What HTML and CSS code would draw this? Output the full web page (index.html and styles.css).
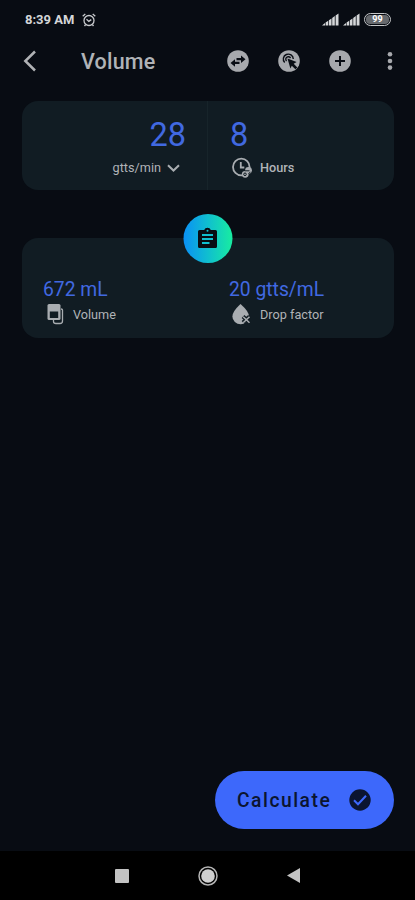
FILE: index.html
```html
<!DOCTYPE html>
<html lang="en">
<head>
    <meta charset="UTF-8">
    <meta name="viewport" content="width=device-width, initial-scale=1.0">
    <title>Volume</title>
    <link rel="stylesheet" href="styles.css">
</head>
<body>
    <!-- Status bar -->
    <div class="status-bar">
        <span class="time">8:39 AM</span>
        <svg class="alarm" width="14" height="14" viewBox="0 0 14 14" fill="none" stroke="#c9cbce" stroke-width="1.3">
            <circle cx="7" cy="7.5" r="5"/>
            <path d="M4.5 6.3 6.8 8.4 9.3 6.6M.7 3.2 3.3 1M13.3 3.2 10.7 1M3.6 11.6 2.5 13M10.4 11.6 11.5 13"/>
        </svg>
        <div class="status-right">
            <svg width="17" height="13" viewBox="0 0 17 13" fill="#d4d6d8">
                <path d="M0 12.5 3 10v2.5zM3.6 9.6 6.2 7.8v4.7H3.6zM6.9 7.3 9.5 5.5v7H6.9zM10.2 5 12.8 3.1v9.4h-2.6zM13.6 2.5 16.5.4v12.1h-2.9z"/>
            </svg>
            <svg width="17" height="13" viewBox="0 0 17 13" fill="#d4d6d8">
                <path d="M0 12.5 3 10v2.5zM3.6 9.6 6.2 7.8v4.7H3.6zM6.9 7.3 9.5 5.5v7H6.9zM10.2 5 12.8 3.1v9.4h-2.6zM13.6 2.5 16.5.4v12.1h-2.9z"/>
            </svg>
            <span class="battery"><span class="battery-level">99</span></span>
        </div>
    </div>

    <!-- Toolbar -->
    <header class="toolbar">
        <svg class="back" width="14" height="22" viewBox="0 0 14 22" fill="none" stroke="#b0b2b5" stroke-width="2.5">
            <path d="M12 1.5 2.3 11 12 20.5"/>
        </svg>
        <h1>Volume</h1>
        <div class="actions">
            <svg width="22" height="22" viewBox="0 0 22 22">
                <circle cx="11" cy="11" r="10.8" fill="#a7a9ad"/>
                <path d="M9.5 8h4.5V5.5l4.500 3.700-4.500 3.700v-2.700H9.500zM12.500 11.800H8V9.300L3.500 13 8 16.700V14h4.500z" fill="#090d14"/>
            </svg>
            <svg width="22" height="22" viewBox="0 0 22 22">
                <circle cx="11" cy="11" r="10.8" fill="#a7a9ad"/>
                <path d="M6.7 12.6A5 5 0 1 1 15.3 9M8.6 11.1a2.5 2.5 0 1 1 3.9-3" fill="none" stroke="#090d14" stroke-width="1.4"/>
                <path d="M9.5 8.5 18.6 12l-2.9 1.8 3.6 3.7-1.9 1.8-3.6-3.6-1.4 2.7z" fill="#090d14"/>
            </svg>
            <svg width="22" height="22" viewBox="0 0 22 22">
                <circle cx="11" cy="11" r="10.8" fill="#a7a9ad"/>
                <path d="M11 6v10M6 11h10" stroke="#090d14" stroke-width="2"/>
            </svg>
            <svg class="more" width="6" height="22" viewBox="0 0 6 22" fill="#a7a9ad">
                <circle cx="3" cy="4.2" r="2.3"/>
                <circle cx="3" cy="11" r="2.3"/>
                <circle cx="3" cy="17.6" r="2.3"/>
            </svg>
        </div>
    </header>

    <main class="content">
        <!-- Input values -->
        <section class="card input-card">
            <div class="field field-rate">
                <div class="value">28</div>
                <div class="label">
                    <span>gtts/min</span>
                    <svg width="13" height="8" viewBox="0 0 13 8" fill="none" stroke="#a9adb1" stroke-width="2">
                        <path d="M1 1.2 6.5 6.5 12 1.2"/>
                    </svg>
                </div>
            </div>
            <div class="field field-time">
                <div class="value">8</div>
                <div class="label">
                    <svg width="20" height="21" viewBox="0 0 20 21" fill="none" stroke="#a9adb1" stroke-width="1.8">
                        <circle cx="9.3" cy="10" r="8.3"/>
                        <path d="M8.8 5v5.5h3.5"/>
                        <circle cx="16.5" cy="13.3" r="3.4" fill="#a9adb1" stroke="none"/>
                        <circle cx="13.2" cy="17.3" r="3.4" fill="#a9adb1" stroke="none"/>
                        <circle cx="13" cy="17.3" r="1.3" stroke="#111c23" stroke-width="1"/>
                        <path d="M13 13.8h4.5M16.5 16.8l2-2" stroke="#111c23" stroke-width="1"/>
                    </svg>
                    <span class="strong">Hours</span>
                </div>
            </div>
        </section>

        <!-- Results -->
        <section class="card result-card">
            <div class="badge">
                <svg width="20" height="23" viewBox="0 0 20 23">
                    <path d="M2 3h4.7a3.5 3.5 0 0 1 6.6 0H18q1.5 0 1.5 1.5v15Q19.5 21 18 21H2Q.5 21 .5 19.5v-15Q.5 3 2 3z" fill="#080d13"/>
                    <circle cx="10" cy="3.7" r="1" fill="#10bfcf"/>
                    <path d="M4.5 8h11M4.5 12h11M4.5 16h7.5" stroke="#10bfcf" stroke-width="2"/>
                </svg>
            </div>
            <div class="field result">
                <div class="value">672 mL</div>
                <div class="label">
                    <svg width="17" height="21" viewBox="0 0 17 21">
                        <path d="M2 0h10q1.5 0 1.5 1.5v13q0 1.5-1.5 1.5H2Q.5 16 .5 14.5v-13Q.5 0 2 0z" fill="#a9adb1"/>
                        <path d="M2.8 7.5h8.4V14H2.8z" fill="#111c23"/>
                        <path d="M6.5 16v1.5q0 2 2.5 2h4q2.5 0 2.5-2.5V6q0-1-1.5-1" fill="none" stroke="#a9adb1" stroke-width="1.3"/>
                    </svg>
                    <span>Volume</span>
                </div>
            </div>
            <div class="field result result-right">
                <div class="value">20 gtts/mL</div>
                <div class="label">
                    <svg width="20" height="21" viewBox="0 0 20 21">
                        <path d="M8.5 0Q17 7.5 17 12.5a8.3 7.7 0 0 1-16.6 0Q.4 7.5 8.5 0z" fill="#a9adb1"/>
                        <path d="M11 12.5l6.5 6M17.5 12.5l-6.5 6" stroke="#111c23" stroke-width="4"/>
                        <path d="M11.2 12.8l6.3 6M17.5 12.8l-6.3 6" stroke="#a9adb1" stroke-width="1.5"/>
                    </svg>
                    <span>Drop factor</span>
                </div>
            </div>
        </section>
    </main>

    <button class="calculate" type="button">
        <span>Calculate</span>
        <svg width="22" height="22" viewBox="0 0 22 22">
            <circle cx="11" cy="11" r="10.7" fill="#0b1530"/>
            <path d="M5 11.2 9 15.2 17 6.8" fill="none" stroke="#3d68fb" stroke-width="2"/>
        </svg>
    </button>

    <!-- System navigation -->
    <nav class="nav-bar">
        <svg width="14" height="14" viewBox="0 0 14 14"><rect width="14" height="14" rx="1" fill="#c3c3c3"/></svg>
        <svg width="20" height="20" viewBox="0 0 20 20">
            <circle cx="10" cy="10" r="9" fill="none" stroke="#b5b5b5" stroke-width="1.5"/>
            <circle cx="10" cy="10" r="6.8" fill="#cfcfcf"/>
        </svg>
        <svg width="13" height="15" viewBox="0 0 13 15"><path d="M13 0v15L0 7.5z" fill="#c3c3c3"/></svg>
    </nav>
</body>
</html>
```
FILE: styles.css
```css
* {
    margin: 0;
    padding: 0;
    box-sizing: border-box;
}

body {
    display: flex;
    flex-direction: column;
    height: 900px;
    font-family: Roboto, "Liberation Sans", sans-serif;
    background-color: #080c13;
    color: #b0b3b7;
}

svg {
    display: block;
    flex: none;
}

/* Status bar */
.status-bar {
    display: flex;
    align-items: center;
    height: 39px;
    padding: 0 24px 0 25px;
}

.time {
    font-size: 13px;
    font-weight: 700;
    color: #d4d6d8;
    white-space: nowrap;
}

.alarm {
    margin-left: 8px;
}

.status-right {
    display: flex;
    align-items: center;
    gap: 4px;
    margin-left: auto;
}

.battery {
    display: flex;
    width: 27px;
    height: 13px;
    padding: 1px;
    border: 1.5px solid #c4c6c8;
    border-radius: 7px;
}

.battery-level {
    flex: 1;
    border-radius: 4px;
    background-color: #66696d;
    color: #fff;
    font-size: 9px;
    font-weight: 700;
    line-height: 9px;
    text-align: center;
}

/* Toolbar */
.toolbar {
    display: flex;
    align-items: center;
    height: 44px;
    padding: 0 22px 0 23px;
}

.toolbar h1 {
    margin-left: 44px;
    font-size: 21.5px;
    font-weight: 500;
    letter-spacing: 0.2px;
}

.actions {
    display: flex;
    gap: 29px;
    margin-left: auto;
}

.more {
    margin-left: 7px;
}

/* Cards */
.content {
    flex: 1;
    padding: 18px 21px 0 22px;
}

.card {
    position: relative;
    display: grid;
    grid-template-columns: 186px 1fr;
    background-color: #111c23;
    border-radius: 16px;
}

.field {
    display: flex;
    flex-direction: column;
}

.value {
    color: #4169e1;
    white-space: nowrap;
}

.label {
    display: flex;
    align-items: center;
    height: 21px;
    font-size: 12.7px;
    white-space: nowrap;
}

.strong {
    font-weight: 500;
}

.input-card {
    height: 89px;
}

.input-card .field {
    padding-top: 13px;
}

.input-card .value {
    height: 43px;
    font-size: 32.5px;
    line-height: 42px;
}

.field-rate {
    align-items: flex-end;
    padding-right: 21px;
    border-right: 1px solid #17242a;
}

.field-rate .label {
    gap: 6px;
    padding-right: 6px;
}

.field-time {
    padding-left: 22px;
}

.field-time .label {
    gap: 8px;
    padding-left: 2px;
}

.result-card {
    height: 100px;
    margin-top: 48px;
}

.result {
    padding: 38px 0 0 21px;
}

.result .value {
    height: 28px;
    font-size: 19.3px;
    line-height: 27px;
}

.result .label {
    gap: 9px;
    padding-left: 4px;
}

.result-right {
    padding-left: 21px;
}

.result-right .label {
    gap: 8px;
    padding-left: 3px;
}

/* Round badge over the top edge of the results */
.badge {
    position: absolute;
    top: -24px;
    left: 50%;
    display: flex;
    align-items: center;
    justify-content: center;
    width: 49px;
    height: 49px;
    padding-right: 1px;
    border-radius: 50%;
    background: linear-gradient(90deg, #0a90f5, #10bfcf 50%, #18eda0);
    transform: translateX(-50%);
}

/* Calculate button */
.calculate {
    display: flex;
    align-items: center;
    justify-content: space-between;
    align-self: flex-end;
    width: 179px;
    height: 58px;
    margin: 0 21px 22px 0;
    padding: 0 23px 0 22px;
    border: none;
    border-radius: 29px;
    background-color: #3d68fb;
    color: #0b1530;
    font-family: inherit;
    font-size: 19.3px;
    font-weight: 500;
    letter-spacing: 1.5px;
    cursor: pointer;
}

/* Navigation bar */
.nav-bar {
    display: flex;
    align-items: center;
    justify-content: center;
    gap: 69px;
    height: 49px;
    background-color: #000;
}
```
